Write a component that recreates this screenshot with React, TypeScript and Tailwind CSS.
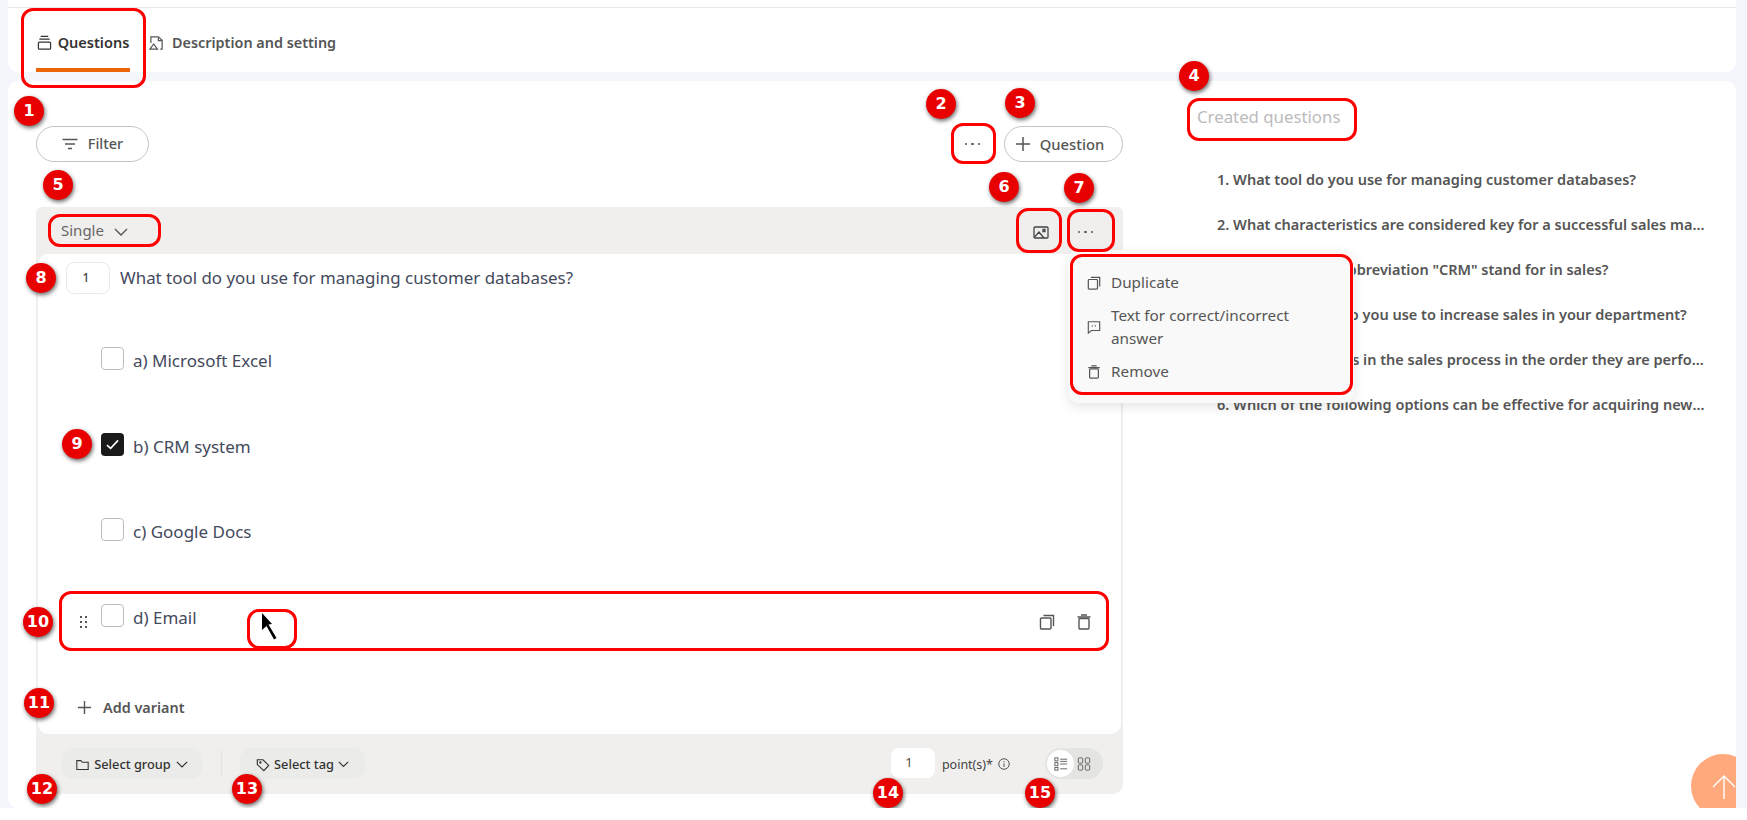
import { ReactNode } from 'react';

const font = 'font-["Noto_Sans",sans-serif]';

function Icon({ className, children }: { className: string; children: ReactNode }) {
  return (
    <svg viewBox="0 0 16 16" fill="none" stroke="currentColor" strokeWidth="1.2" className={className}>
      {children}
    </svg>
  );
}

const CopyIcon = ({ className }: { className: string }) => (
  <Icon className={className}>
    <rect x="1.5" y="4" width="10.5" height="11" rx="1" strokeWidth="1.4" />
    <path d="M4.5 1.5H14.5V12" strokeWidth="1.4" />
  </Icon>
);

const TrashIcon = ({ className }: { className: string }) => (
  <Icon className={className}>
    <rect x="3" y="4.5" width="10" height="10.5" rx="1" strokeWidth="1.4" />
    <path d="M1.5 3H14.5M5 1H11" strokeWidth="1.4" />
  </Icon>
);

const Dots = () => (
  <div className="flex gap-[4px]">
    <span className="h-[2.5px] w-[2.5px] rounded-full bg-[#555]" />
    <span className="h-[2.5px] w-[2.5px] rounded-full bg-[#555]" />
    <span className="h-[2.5px] w-[2.5px] rounded-full bg-[#555]" />
  </div>
);

const Chevron = ({ className }: { className: string }) => (
  <svg viewBox="0 0 14 8" fill="none" stroke="currentColor" strokeWidth="1.4" className={className}>
    <path d="M1 1L7 7L13 1" />
  </svg>
);

function Check({ checked }: { checked?: boolean }) {
  if (checked) {
    return (
      <span className="flex h-[23px] w-[23px] shrink-0 items-center justify-center rounded-[4px] bg-[#1b1a1a]">
        <svg viewBox="0 0 14 12" fill="none" stroke="white" strokeWidth="1.7" className="w-[13px]">
          <path d="M1 6.5L5 10L13 1.5" />
        </svg>
      </span>
    );
  }
  return <span className="block h-[23px] w-[23px] shrink-0 rounded-[4px] border border-[#bdbdbd] bg-white" />;
}

function Option({ label, checked }: { label: string; checked?: boolean }) {
  return (
    <div className="flex h-[60px] items-start gap-[9px] pl-[63px] pt-[13px]">
      <Check checked={checked} />
      <span className="text-[17px] leading-[27px] text-[#444a5c]">{label}</span>
    </div>
  );
}

function Badge({ n, className }: { n: number; className: string }) {
  return (
    <span
      className={`absolute flex h-[30px] w-[30px] items-center justify-center rounded-full bg-[#e80000] font-["DejaVu_Sans",sans-serif] text-[16px] font-bold text-white shadow-[1px_2px_4px_rgba(0,0,0,0.6)] ${className}`}
    >
      {n}
    </span>
  );
}

const Mark = ({ className }: { className: string }) => (
  <span className={`absolute rounded-[12px] border-[3px] border-[#f00] ${className}`} />
);

const created = [
  '1. What tool do you use for managing customer databases?',
  '2. What characteristics are considered key for a successful sales manager in the company?',
  '3. What does the abbreviation "CRM" stand for in sales?',
  '4. What methods do you use to increase sales in your department?',
  '5. Arrange the steps in the sales process in the order they are performed by a manager',
  '6. Which of the following options can be effective for acquiring new customers in sales?',
];

export default function App() {
  return (
    <div className={`relative h-[808px] overflow-hidden bg-[#f4f6fb] pl-2 pr-[11px] ${font}`}>
      <div className="h-[7px] bg-white" />
      <div className="h-[65px] rounded-b-[10px] border-t border-[#e6e7e9] bg-white">
        <div className="flex h-[64px] items-stretch pl-[28px]">
          <div className="flex h-full w-[94px] items-center justify-center gap-[6px] border-b-4 border-[#ec6608] pt-[9px] text-[#333]">
            <svg viewBox="0 0 16 16" fill="none" stroke="currentColor" strokeWidth="1.3" className="h-[15px] w-[15px] shrink-0">
              <path d="M4 1.5H12M2.5 4.5H13.5" />
              <rect x="1.5" y="7.5" width="13" height="7.5" rx="1" />
            </svg>
            <span className="text-[14.5px] font-semibold">Questions</span>
          </div>
          <div className="ml-[19px] flex items-center gap-[8px] pt-[5px] text-[#555]">
            <svg viewBox="0 0 16 16" fill="none" stroke="currentColor" strokeWidth="1.3" className="h-[16px] w-[15px] shrink-0">
              <path d="M2 8V1.5H10L14 5V14.5H12" />
              <path d="M1 14.5L5 9L9 14.5Z" />
              <path d="M10 2V5.5H14" />
            </svg>
            <span className="text-[14.4px] font-semibold">Description and setting</span>
          </div>
        </div>
      </div>

      <div className="mt-[9px] flex h-[727px] rounded-[10px] bg-white">
        <div className="w-[1115px] shrink-0 pl-[28px] pt-[45px]">
          <div className="flex h-[36px] items-center justify-between">
            <button className="flex h-[36px] w-[113px] items-center justify-center gap-[10px] rounded-full border border-[#c4c4c4] text-[14.5px] font-medium text-[#555]">
              <svg viewBox="0 0 16 12" fill="none" stroke="currentColor" strokeWidth="1.4" className="w-[16px]">
                <path d="M0.5 1.5H15.5M3 6H13M6 10.5H10" />
              </svg>
              Filter
            </button>
            <div className="flex items-center gap-[24px]">
              <Dots />
              <button className="flex h-[36px] w-[119px] items-center justify-center gap-[9px] rounded-full border border-[#c4c4c4] pr-[8px] text-[14.8px] font-medium text-[#555]">
                <svg viewBox="0 0 16 16" fill="none" stroke="currentColor" strokeWidth="1.5" className="w-[16px]">
                  <path d="M8 1V15M1 8H15" />
                </svg>
                Question
              </button>
            </div>
          </div>

          <div className="mt-[45px] overflow-hidden rounded-b-[10px] rounded-t-[6px] bg-[#f0efed]">
            <div className="flex h-[47px] items-center justify-between pl-[25px] pr-[30px]">
              <div className="flex items-center gap-[10px] text-[#666]">
                <span className="text-[15px]">Single</span>
                <Chevron className="mt-[2px] w-[14px] text-[#555]" />
              </div>
              <div className="flex items-center gap-[29px] pt-[3px] text-[#444]">
                <svg viewBox="0 0 16 13" fill="none" stroke="currentColor" strokeWidth="1.3" className="h-[13px] w-[16px]">
                  <rect x="1" y="1" width="14" height="11" rx="1" />
                  <path d="M1.5 11L6 6L11 12M10 3.5H12V5.5H10Z" />
                </svg>
                <Dots />
              </div>
            </div>

            <div className="mx-[2px] h-[480px] rounded-[10px] bg-white">
              <div className="flex items-center gap-[10px] pl-[28px] pt-[8px]">
                <span className="flex h-[32px] w-[44px] items-center justify-center rounded-[8px] border border-[#e9e9e9] pr-[4px] text-[12px] font-medium text-[#444]">
                  1
                </span>
                <span className="text-[16.9px] text-[#444a5c]">What tool do you use for managing customer databases?</span>
              </div>

              <div className="mt-[40px] flex flex-col gap-[25.67px]">
                <Option label="a) Microsoft Excel" />
                <Option label="b) CRM system" checked />
                <Option label="c) Google Docs" />
                <div className="flex h-[60px] items-start pr-[29px] pt-[13px]">
                  <div className="ml-[42px] mt-[12px] grid w-[7px] grid-cols-2 gap-x-[3px] gap-y-[3px]">
                    <span className="h-[2px] w-[2px] bg-[#555]" />
                    <span className="h-[2px] w-[2px] bg-[#555]" />
                    <span className="h-[2px] w-[2px] bg-[#555]" />
                    <span className="h-[2px] w-[2px] bg-[#555]" />
                    <span className="h-[2px] w-[2px] bg-[#555]" />
                    <span className="h-[2px] w-[2px] bg-[#555]" />
                  </div>
                  <div className="ml-[14px] flex">
                    <Check />
                  </div>
                  <span className="ml-[9px] text-[17px] leading-[27px] text-[#444a5c]">d) Email</span>
                  <div className="ml-auto mt-[10px] flex gap-[21px] text-[#555]">
                    <CopyIcon className="h-[16px] w-[16px]" />
                    <TrashIcon className="h-[16px] w-[16px]" />
                  </div>
                </div>
              </div>

              <div className="mt-[47px] flex h-[20px] items-center gap-[11px] pl-[39px] text-[#555]">
                <svg viewBox="0 0 16 16" fill="none" stroke="currentColor" strokeWidth="1.5" className="w-[15px]">
                  <path d="M8 1V15M1 8H15" />
                </svg>
                <span className="text-[14.4px] font-semibold">Add variant</span>
              </div>
            </div>

            <div className="flex h-[60px] items-start pl-[25px] pr-[20px] pt-[14px]">
              <button className="flex h-[31px] w-[142px] items-center justify-center gap-[5px] rounded-[12px] bg-[#ebebe9] pt-[2px] text-[12.8px] font-medium text-[#333]">
                <svg viewBox="0 0 16 14" fill="none" stroke="currentColor" strokeWidth="1.3" className="w-[13px]">
                  <path d="M1 2H6L8 4H15V13H1Z" />
                </svg>
                Select group
                <Chevron className="w-[12px]" />
              </button>
              <span className="ml-[18px] mt-[2px] h-[27px] w-px bg-[#e2e2e0]" />
              <button className="ml-[18px] flex h-[31px] w-[125px] items-center justify-center gap-[4px] rounded-[12px] bg-[#ebebe9] pt-[2px] text-[12.8px] font-medium text-[#333]">
                <svg viewBox="0 0 16 16" fill="none" stroke="currentColor" strokeWidth="1.3" className="w-[14px]">
                  <path d="M1.5 2H8L14.5 8.5L9 14.5L1.5 7.5Z" />
                  <circle cx="5" cy="5" r="0.7" />
                </svg>
                Select tag
                <Chevron className="w-[11px]" />
              </button>

              <span className="ml-auto flex h-[30px] w-[44px] items-center justify-center rounded-[8px] bg-white pr-[8px] text-[13px] text-[#5b4a3a]">
                1
              </span>
              <span className="ml-[7px] mt-[8px] text-[12.5px] text-[#444]">point(s)*</span>
              <svg viewBox="0 0 16 16" fill="none" stroke="#444" strokeWidth="1.2" className="ml-[5px] mt-[10px] h-[12px] w-[12px]">
                <circle cx="8" cy="8" r="7" />
                <path d="M8 7V12M8 4V5.5" />
              </svg>
              <div className="ml-[35px] flex h-[31px] w-[58px] items-center rounded-full bg-[#e4e4e2] px-[2px] text-[#555]">
                <span className="flex h-[27px] w-[27px] items-center justify-center rounded-full bg-white">
                  <svg viewBox="0 0 16 16" fill="none" stroke="currentColor" strokeWidth="1" className="w-[14px]">
                    <rect x="1" y="1" width="3.5" height="3.5" />
                    <rect x="1" y="6.5" width="3.5" height="3.5" />
                    <rect x="1" y="12" width="3.5" height="3" />
                    <path d="M7 2.5H15M7 5H15M7 8H15M7 13.5H15" />
                  </svg>
                </span>
                <svg viewBox="0 0 16 16" fill="none" stroke="currentColor" strokeWidth="1" className="ml-[3px] w-[14px]">
                  <rect x="1.5" y="1" width="5" height="6" rx="1" />
                  <rect x="9.5" y="1" width="5" height="6" rx="1" />
                  <rect x="1.5" y="9" width="5" height="6" rx="1" />
                  <rect x="9.5" y="9" width="5" height="6" rx="1" />
                </svg>
              </div>
            </div>
          </div>
        </div>

        <div className="min-w-0 flex-1 pl-[74px] pt-[24px]">
          <h2 className="text-[16.8px] font-normal leading-[24px] text-[#bbb]">Created questions</h2>
          <ul className="mt-[40px] flex w-[510px] flex-col pl-[20px]">
            {created.map((q) => (
              <li key={q} className="h-[45px] truncate text-[14.5px] font-semibold leading-[20px] text-[#555]">
                {q}
              </li>
            ))}
          </ul>
        </div>
      </div>

      {/* row action menu */}
      <div className="absolute left-[1068px] top-[250px] h-[153px] w-[286px] rounded-[10px] bg-[#f9f9f9] px-[19px] pt-[21px] text-[15.3px] leading-[23px] text-[#555] shadow-[0_4px_12px_rgba(0,0,0,0.1)]">
        <div className="flex items-center gap-[10px]">
          <CopyIcon className="h-[14px] w-[14px] shrink-0" />
          <span>Duplicate</span>
        </div>
        <div className="mt-[10px] flex items-center gap-[10px]">
          <svg viewBox="0 0 16 16" fill="none" stroke="currentColor" strokeWidth="1.3" className="h-[14px] w-[14px] shrink-0">
            <path d="M1.5 2H14.5V12H5L1.5 15Z" />
            <path d="M6 6V7.5M9.5 6V7.5" />
          </svg>
          <span className="w-[200px]">Text for correct/incorrect answer</span>
        </div>
        <div className="mt-[10px] flex items-center gap-[10px]">
          <TrashIcon className="h-[14px] w-[14px] shrink-0" />
          <span>Remove</span>
        </div>
      </div>

      {/* scroll to top */}
      <div className="absolute left-[1691px] top-[754px] flex h-[64px] w-[64px] justify-start rounded-full bg-[#ffa97d] pl-[21px] pt-[21px]">
        <svg viewBox="0 0 24 24" fill="none" stroke="white" strokeWidth="1.4" className="h-[24px] w-[24px]">
          <path d="M12 24V1M1 12L12 1L23 12" />
        </svg>
      </div>
      <span className="absolute left-[1736px] top-[0px] h-[808px] w-[11px] bg-[#f4f6fb]" />

      {/* cursor */}
      <svg viewBox="0 0 16 27" className="absolute left-[261px] top-[613px] h-[27px] w-[16px]">
        <path d="M1 0L11 11L7.5 11.5L15.5 25L13 26.5L5.5 13L1 17Z" fill="black" />
      </svg>

      {/* tutorial highlights */}
      <Mark className="left-[21px] top-[8px] h-[80px] w-[125px]" />
      <Mark className="left-[951px] top-[123px] h-[41px] w-[45px]" />
      <Mark className="left-[1187px] top-[98px] h-[43px] w-[170px]" />
      <Mark className="left-[48px] top-[214px] h-[33px] w-[113px]" />
      <Mark className="left-[1016px] top-[208px] h-[45px] w-[46px]" />
      <Mark className="left-[1067px] top-[209px] h-[43px] w-[48px]" />
      <Mark className="left-[1070px] top-[254px] h-[141px] w-[283px]" />
      <Mark className="left-[59px] top-[591px] h-[60px] w-[1050px]" />
      <Mark className="left-[247px] top-[609px] h-[40px] w-[50px]" />

      <Badge n={1} className="left-[14px] top-[96px]" />
      <Badge n={2} className="left-[926px] top-[89px]" />
      <Badge n={3} className="left-[1005px] top-[88px]" />
      <Badge n={4} className="left-[1179px] top-[61px]" />
      <Badge n={5} className="left-[43px] top-[170px]" />
      <Badge n={6} className="left-[989px] top-[172px]" />
      <Badge n={7} className="left-[1064px] top-[173px]" />
      <Badge n={8} className="left-[26px] top-[263px]" />
      <Badge n={9} className="left-[62px] top-[429px]" />
      <Badge n={10} className="left-[23px] top-[607px]" />
      <Badge n={11} className="left-[24px] top-[688px]" />
      <Badge n={12} className="left-[27px] top-[774px]" />
      <Badge n={13} className="left-[232px] top-[774px]" />
      <Badge n={14} className="left-[873px] top-[778px]" />
      <Badge n={15} className="left-[1025px] top-[778px]" />
    </div>
  );
}
